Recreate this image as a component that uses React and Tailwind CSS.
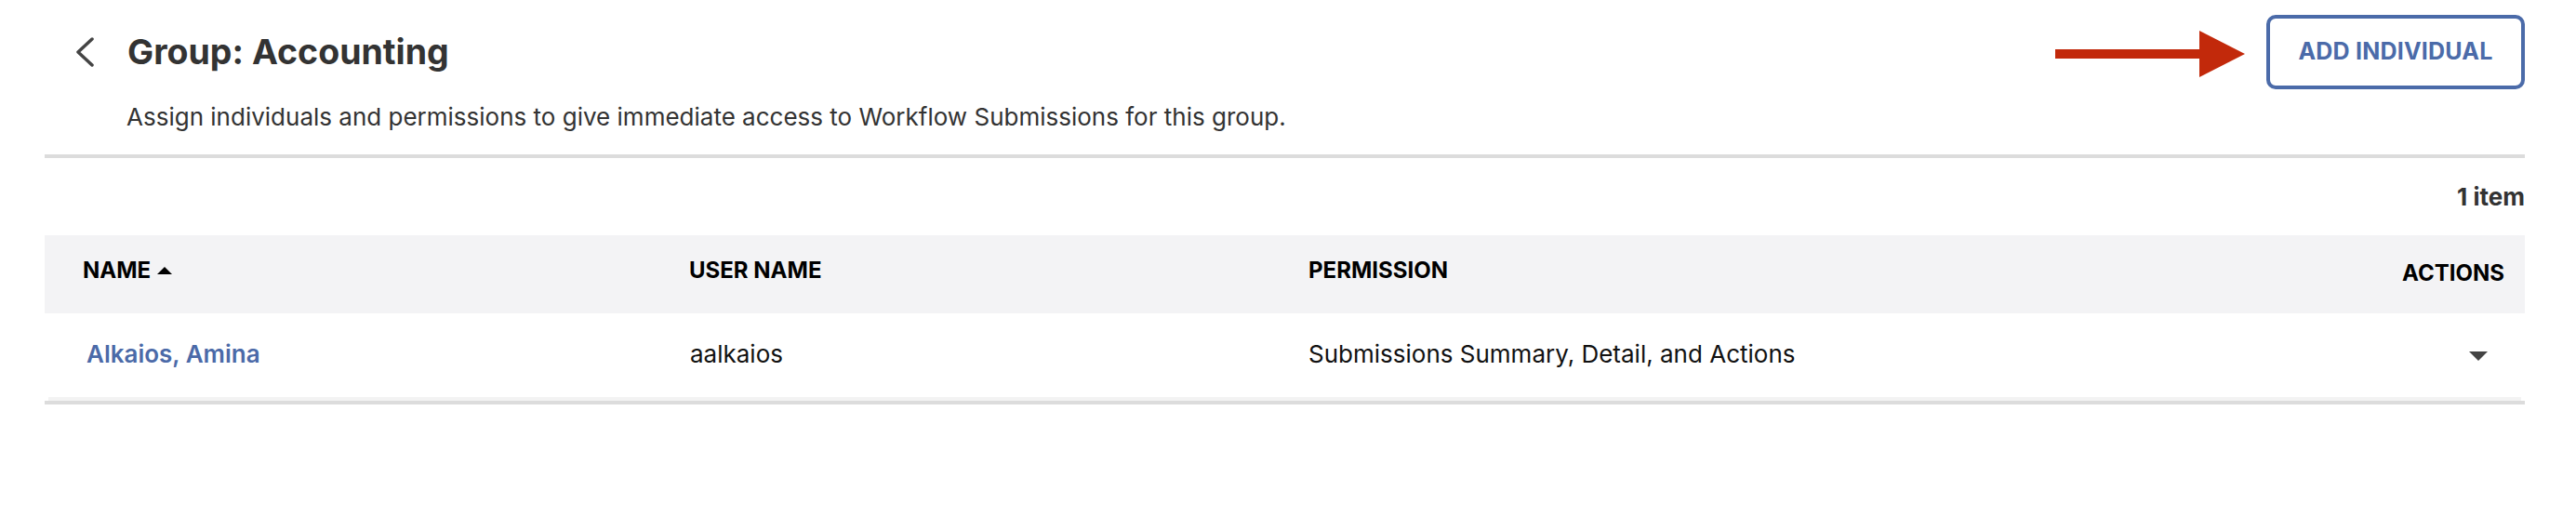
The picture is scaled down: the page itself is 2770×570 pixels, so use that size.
export default function App() {
  return (
    <div className="relative min-h-[570px] bg-white pl-[48px] pr-[55px] pt-[16px] font-['Inter','Liberation_Sans',sans-serif] text-[#333]">
      {/* annotation arrow pointing at the button */}
      <svg className="absolute left-[2210px] top-[33px]" width="205" height="50" viewBox="0 0 205 50">
        <rect x="0" y="20" width="158" height="10" fill="#c2290b" />
        <polygon points="155,0 204,25 155,50" fill="#c2290b" />
      </svg>

      {/* Page header */}
      <div className="flex items-start justify-between border-b-4 border-[#dcdcdc] pb-[22px]">
        <div className="pt-[18px]">
          <div className="flex items-center">
            <button className="ml-[32px] flex h-[32px] w-[22px] items-center justify-center text-[#444]">
              <svg width="22" height="32" viewBox="0 0 22 32" fill="none">
                <polyline points="19,2 4,16 19,30" stroke="currentColor" strokeWidth="3.5" strokeLinecap="round" strokeLinejoin="round" />
              </svg>
            </button>
            <h1 className="ml-[35px] text-[37.5px] font-bold leading-[44px] text-[#333]">Group: Accounting</h1>
          </div>
          <p className="mt-[30px] pl-[88px] text-[26px] leading-[36px] text-[#333]">
            Assign individuals and permissions to give immediate access to Workflow Submissions for this group.
          </p>
        </div>
        <button className="flex h-[80px] w-[278px] items-center justify-center rounded-[10px] border-4 border-[#4b6ba9] text-[25px] font-bold tracking-[0.2px] text-[#4b6ba9]">
          ADD INDIVIDUAL
        </button>
      </div>

      {/* Count */}
      <div className="mt-[24px] text-right text-[26px] font-bold leading-[36px] text-[#333]">1 item</div>

      {/* Table */}
      <div className="mt-[23px]">
        <div className="grid h-[84px] grid-cols-[652px_666px_1fr_auto] bg-[#f3f3f5] text-[24px] font-bold leading-[32px] text-black">
          <div className="flex items-start pl-[41px] pt-[22px]">
            NAME
            <svg className="ml-[7px] mt-[12px]" width="16" height="8" viewBox="0 0 16 8">
              <polygon points="0,8 8,0 16,8" fill="#000" />
            </svg>
          </div>
          <div className="pl-[41px] pt-[22px]">USER NAME</div>
          <div className="pl-[41px] pt-[22px]">PERMISSION</div>
          <div className="pr-[22px] pt-[25px] text-right">ACTIONS</div>
        </div>

        <div className="grid h-[90px] grid-cols-[652px_666px_1fr_auto] text-[26px] leading-[36px] text-[#111]">
          <div className="pl-[45px] pt-[26px]">
            <a className="font-semibold text-[#4b6aa8]">Alkaios, Amina</a>
          </div>
          <div className="pl-[42px] pt-[26px]">aalkaios</div>
          <div className="pl-[41px] pt-[26px]">Submissions Summary, Detail, and Actions</div>
          <div className="flex items-start justify-end pr-[40px] pt-[41px]">
            <svg width="20" height="10" viewBox="0 0 20 10">
              <polygon points="0,0 20,0 10,10" fill="#444" />
            </svg>
          </div>
        </div>
        <div className="mx-[4px] h-[4px] bg-[#f3f3f3]" />
        <div className="h-[4px] bg-[#dcdcdc]" />
      </div>
    </div>
  );
}
